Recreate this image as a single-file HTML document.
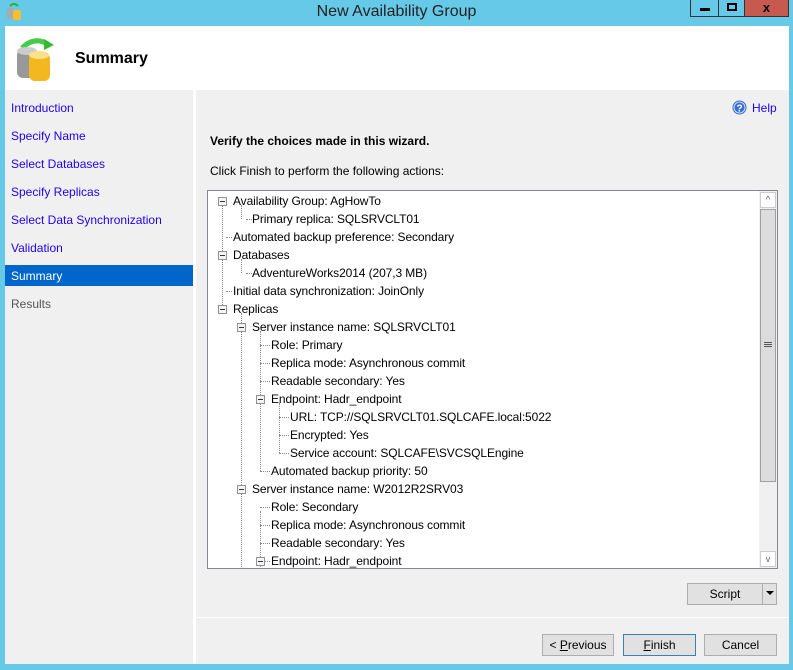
<!DOCTYPE html>
<html><head><style>
*{margin:0;padding:0;box-sizing:border-box}
body{width:793px;height:670px;background:#66c9e8;position:relative;font-family:"Liberation Sans",sans-serif;font-size:12px;overflow:hidden}
.abs{position:absolute}
.title{left:0;top:3px;width:793px;text-align:center;font-size:16px;color:#222}
.wb{top:0;height:17px;border:1px solid #333;border-top:none}
.content{left:5px;top:26px;width:784px;height:638px;background:#f0f0f0}
.nav a{position:absolute;left:6px;color:#2200ee;text-decoration:none}
.tree{left:207px;top:190px;width:571px;height:379px;background:#fff;border:1px solid #828790;overflow:hidden}
.row{position:absolute;white-space:nowrap;color:#000;height:18px;line-height:18px;letter-spacing:-0.1px}
.btn{position:absolute;height:22px;background:#e1e1e1;border:1px solid #adadad;text-align:center;line-height:20px;color:#000}
.pm{position:absolute;width:9px;height:9px;border:1px solid #919191;background:#f4f4f4}
.pm:after{content:"";position:absolute;left:1px;top:3px;width:5px;height:1px;background:#333}
.vl{position:absolute;border-left:1px dotted #888;width:0}
.hl{position:absolute;border-top:1px dotted #888;height:0}
</style></head><body>
<svg class="abs" style="left:6px;top:2px" width="18" height="18"><rect x="1" y="6" width="7" height="11" rx="2" fill="#aaa"/><rect x="7" y="8" width="8" height="10" rx="2" fill="#f5c030"/><path d="M4 4 Q8 0 12 4" stroke="#3a3" stroke-width="2" fill="none"/></svg>
<div class="abs title">New Availability Group</div>
<div class="abs wb" style="left:690px;width:29px;background:#66c9e8"><div class="abs" style="left:9px;top:8px;width:10px;height:3px;background:#000"></div></div>
<div class="abs wb" style="left:718px;width:27px;background:#66c9e8"><div class="abs" style="left:8px;top:3px;width:10px;height:8px;border:2px solid #000"></div></div>
<div class="abs wb" style="left:744px;width:45px;background:#c75a4f;text-align:center;font-weight:bold;font-size:13px;line-height:15px">x</div>
<div class="abs content"></div>
<div class="abs" style="left:5px;top:26px;width:784px;height:64px;background:#fff"></div>
<svg class="abs" style="left:14px;top:34px" width="46" height="48"><path d="M8 14 Q20 2 34 10" stroke="#4c4" stroke-width="5" fill="none"/><path d="M30 5 L40 11 L30 16Z" fill="#3b3"/><rect x="3" y="15" width="20" height="29" rx="6" fill="#999"/><ellipse cx="13" cy="17" rx="10" ry="4" fill="#ccc"/><rect x="15" y="19" width="21" height="28" rx="6" fill="#f3b820"/><ellipse cx="25" cy="21" rx="10" ry="4" fill="#fde08a"/></svg>
<div class="abs" style="left:75px;top:50px;font-size:16px;font-weight:bold">Summary</div>
<div class="abs" style="left:193px;top:90px;width:3px;height:574px;background:#fff"></div>
<div class="abs nav" style="left:5px;top:90px;width:188px;height:574px">
<a style="top:11px">Introduction</a><a style="top:39px">Specify Name</a><a style="top:67px">Select Databases</a><a style="top:95px">Specify Replicas</a><a style="top:123px">Select Data Synchronization</a><a style="top:151px">Validation</a>
<div class="abs" style="left:0;top:175px;width:188px;height:21px;background:#0066cc"></div>
<a style="top:179px;color:#fff">Summary</a><a style="top:207px;color:#555">Results</a>
</div>
<svg class="abs" style="left:732px;top:100px" width="15" height="15"><circle cx="7.5" cy="7.5" r="7" fill="#3a6fd0"/><circle cx="7.5" cy="7.5" r="5.5" fill="none" stroke="#cde" stroke-width="1"/><text x="7.5" y="11.5" font-size="10" font-weight="bold" fill="#fff" text-anchor="middle" font-family="Liberation Sans">?</text></svg>
<div class="abs" style="left:752px;top:101px;color:#2200ee">Help</div>
<div class="abs" style="left:210px;top:134px;font-weight:bold">Verify the choices made in this wizard.</div>
<div class="abs" style="left:210px;top:164px">Click Finish to perform the following actions:</div>
<div class="abs tree">
<div class="vl" style="left:14px;top:14px;height:104px"></div>
<div class="vl" style="left:33px;top:122px;height:176px"></div>
<div class="vl" style="left:33px;top:302px;height:76px"></div>
<div class="vl" style="left:52px;top:140px;height:140px"></div>
<div class="vl" style="left:52px;top:320px;height:58px"></div>
<div class="vl" style="left:71px;top:212px;height:50px"></div>
<div class="vl" style="left:33px;top:14px;height:14px"></div>
<div class="vl" style="left:33px;top:68px;height:14px"></div>
<div class="hl" style="left:38px;top:28px;width:6px"></div>
<div class="hl" style="left:18px;top:46px;width:6px"></div>
<div class="hl" style="left:38px;top:82px;width:6px"></div>
<div class="hl" style="left:18px;top:100px;width:6px"></div>
<div class="hl" style="left:52px;top:154px;width:10px"></div>
<div class="hl" style="left:52px;top:172px;width:10px"></div>
<div class="hl" style="left:52px;top:190px;width:10px"></div>
<div class="hl" style="left:71px;top:226px;width:10px"></div>
<div class="hl" style="left:71px;top:244px;width:10px"></div>
<div class="hl" style="left:71px;top:262px;width:10px"></div>
<div class="hl" style="left:52px;top:280px;width:10px"></div>
<div class="hl" style="left:52px;top:316px;width:10px"></div>
<div class="hl" style="left:52px;top:334px;width:10px"></div>
<div class="hl" style="left:52px;top:352px;width:10px"></div>
<div class="hl" style="left:52px;top:370px;width:10px"></div>
<div class="pm" style="left:10px;top:6px"></div>
<div class="pm" style="left:10px;top:60px"></div>
<div class="pm" style="left:10px;top:114px"></div>
<div class="pm" style="left:29px;top:132px"></div>
<div class="pm" style="left:48px;top:204px"></div>
<div class="pm" style="left:29px;top:294px"></div>
<div class="pm" style="left:48px;top:366px"></div>
<div class="row" style="left:25px;top:1px">Availability Group: AgHowTo</div>
<div class="row" style="left:44px;top:19px">Primary replica: SQLSRVCLT01</div>
<div class="row" style="left:25px;top:37px">Automated backup preference: Secondary</div>
<div class="row" style="left:25px;top:55px">Databases</div>
<div class="row" style="left:44px;top:73px">AdventureWorks2014 (207,3 MB)</div>
<div class="row" style="left:25px;top:91px">Initial data synchronization: JoinOnly</div>
<div class="row" style="left:25px;top:109px">Replicas</div>
<div class="row" style="left:44px;top:127px">Server instance name: SQLSRVCLT01</div>
<div class="row" style="left:63px;top:145px">Role: Primary</div>
<div class="row" style="left:63px;top:163px">Replica mode: Asynchronous commit</div>
<div class="row" style="left:63px;top:181px">Readable secondary: Yes</div>
<div class="row" style="left:63px;top:199px">Endpoint: Hadr_endpoint</div>
<div class="row" style="left:82px;top:217px">URL: TCP://SQLSRVCLT01.SQLCAFE.local:5022</div>
<div class="row" style="left:82px;top:235px">Encrypted: Yes</div>
<div class="row" style="left:82px;top:253px">Service account: SQLCAFE\SVCSQLEngine</div>
<div class="row" style="left:63px;top:271px">Automated backup priority: 50</div>
<div class="row" style="left:44px;top:289px">Server instance name: W2012R2SRV03</div>
<div class="row" style="left:63px;top:307px">Role: Secondary</div>
<div class="row" style="left:63px;top:325px">Replica mode: Asynchronous commit</div>
<div class="row" style="left:63px;top:343px">Readable secondary: Yes</div>
<div class="row" style="left:63px;top:361px">Endpoint: Hadr_endpoint</div>
<div class="abs" style="left:551px;top:0;width:18px;height:377px;background:#f0f0f0"></div>
<div class="abs" style="left:552px;top:1px;width:16px;height:16px;background:#fff;border:1px solid #ccc;text-align:center;font-size:10px;color:#666;line-height:16px">^</div>
<div class="abs" style="left:552px;top:18px;width:16px;height:273px;background:#dcdcdc;border:1px solid #a0a0a0"></div>
<div class="abs" style="left:556px;top:151px;width:8px;height:5px;border-top:1px solid #555;border-bottom:1px solid #555"></div>
<div class="abs" style="left:556px;top:153px;width:8px;height:1px;background:#555"></div>
<div class="abs" style="left:552px;top:360px;width:16px;height:16px;background:#fff;border:1px solid #ccc;text-align:center;font-size:9px;color:#666;line-height:14px">v</div>
</div>
<div class="btn" style="left:687px;top:583px;width:90px;padding-right:14px">Script</div>
<div class="abs" style="left:762px;top:584px;width:1px;height:20px;background:#adadad"></div>
<div class="abs" style="left:766px;top:591px;width:0;height:0;border-left:4px solid transparent;border-right:4px solid transparent;border-top:4px solid #000"></div>
<div class="abs" style="left:196px;top:617px;width:593px;height:1px;background:#fff"></div>
<div class="btn" style="left:542px;top:634px;width:72px">&lt; <u>P</u>revious</div>
<div class="btn" style="left:623px;top:634px;width:73px;border-color:#3c7fb1"><u>F</u>inish</div>
<div class="btn" style="left:704px;top:634px;width:73px">Cancel</div>
</body></html>
